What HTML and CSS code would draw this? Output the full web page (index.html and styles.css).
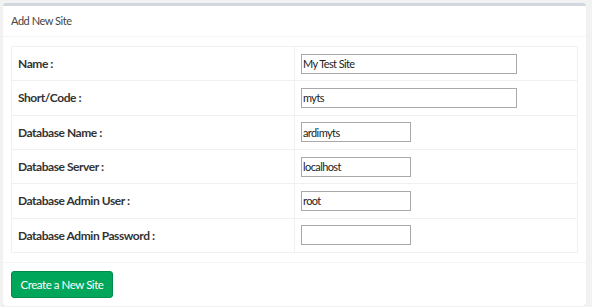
FILE: index.html
```html
<!DOCTYPE html>
<html lang="en">
<head>
    <meta charset="UTF-8">
    <title>Add New Site</title>
    <link rel="stylesheet" href="styles.css">
</head>
<body>

    <div class="box">
        <div class="box-header">
            <h3 class="box-title">Add New Site</h3>
        </div>

        <form class="box-body">
            <table class="site-table">
                <tr>
                    <td class="label">Name :</td>
                    <td><input type="text" class="wide" value="My Test Site"></td>
                </tr>
                <tr>
                    <td class="label">Short/Code :</td>
                    <td><input type="text" class="wide" value="myts"></td>
                </tr>
                <tr>
                    <td class="label">Database Name :</td>
                    <td><input type="text" class="short" value="ardimyts"></td>
                </tr>
                <tr>
                    <td class="label">Database Server :</td>
                    <td><input type="text" class="short" value="localhost"></td>
                </tr>
                <tr>
                    <td class="label">Database Admin User :</td>
                    <td><input type="text" class="short" value="root"></td>
                </tr>
                <tr>
                    <td class="label">Database Admin Password :</td>
                    <td><input type="password" class="short" value=""></td>
                </tr>
            </table>
        </form>

        <div class="box-footer">
            <button type="button" class="btn-success">Create a New Site</button>
        </div>
    </div>

</body>
</html>
```

FILE: styles.css
```css
/* 기본 스타일링 */
body {
    font-family: Lato, "Liberation Sans", sans-serif;
    font-size: 12px;
    color: #333;
    margin: 0;
    padding: 3px 6px 0 3px;
    background-color: #f2f2f2;
}

.box {
    background-color: #fff;
    border-top: 3px solid #d2d6de;
    border-radius: 3px;
    box-shadow: 0 1px 1px rgba(0, 0, 0, 0.1);
}

.box-header {
    padding: 8px 8px 9px;
    border-bottom: 1px solid #f4f4f4;
}

.box-title {
    margin: 0;
    font-size: 11px;
    font-weight: normal;
    line-height: 13px;
    letter-spacing: -0.45px;
    color: #444;
}

.box-body {
    padding: 9px 8px;
}

/* 테이블 */
.site-table {
    width: 100%;
    border-collapse: collapse;
    table-layout: fixed;
}

.site-table td {
    border: 1px solid #f0f0f0;
    padding: 6px;
    line-height: 21.33px;
    vertical-align: middle;
}

.site-table td.label {
    font-weight: bold;
    letter-spacing: -0.45px;
    color: #333;
}

.site-table input {
    display: block;
    box-sizing: border-box;
    height: 20px;
    margin: 0.66px 0;
    padding: 0 1px;
    border: 1px solid #a9a9a9;
    font-family: inherit;
    font-size: 11px;
    letter-spacing: -0.6px;
    color: #222;
    background-color: #fff;
}

.site-table input.wide {
    width: 216px;
}

.site-table input.short {
    width: 110px;
}

.box-footer {
    padding: 8px 8px 8px;
    border-top: 1px solid #f4f4f4;
}

.btn-success {
    width: 102px;
    height: 27px;
    padding: 0;
    border: 1px solid #008d4c;
    border-radius: 3px;
    background-color: #00a65a;
    color: #fff;
    font-family: inherit;
    font-size: 11.5px;
    letter-spacing: -0.45px;
}
```
